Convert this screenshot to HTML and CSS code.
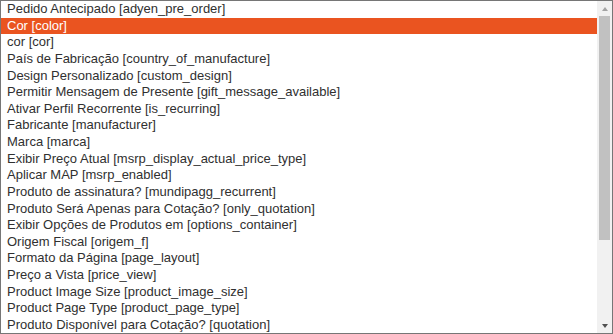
FILE: index.html
```html
<!DOCTYPE html>
<html lang="en">
<head>
    <meta charset="UTF-8">
    <meta name="viewport" content="width=device-width, initial-scale=1.0">
    <title>Atributos</title>
    <link rel="stylesheet" href="styles.css">
</head>
<body>
    <!-- Multiselect list of product attributes -->
    <div class="listbox">
        <div class="options">
            <div class="option">Pedido Antecipado [adyen_pre_order]</div>
            <div class="option selected">Cor [color]</div>
            <div class="option">cor [cor]</div>
            <div class="option">País de Fabricação [country_of_manufacture]</div>
            <div class="option">Design Personalizado [custom_design]</div>
            <div class="option">Permitir Mensagem de Presente [gift_message_available]</div>
            <div class="option">Ativar Perfil Recorrente [is_recurring]</div>
            <div class="option">Fabricante [manufacturer]</div>
            <div class="option">Marca [marca]</div>
            <div class="option">Exibir Preço Atual [msrp_display_actual_price_type]</div>
            <div class="option">Aplicar MAP [msrp_enabled]</div>
            <div class="option">Produto de assinatura? [mundipagg_recurrent]</div>
            <div class="option">Produto Será Apenas para Cotação? [only_quotation]</div>
            <div class="option">Exibir Opções de Produtos em [options_container]</div>
            <div class="option">Origem Fiscal [origem_f]</div>
            <div class="option">Formato da Página [page_layout]</div>
            <div class="option">Preço a Vista [price_view]</div>
            <div class="option">Product Image Size [product_image_size]</div>
            <div class="option">Product Page Type [product_page_type]</div>
            <div class="option">Produto Disponível para Cotação? [quotation]</div>
        </div>

        <!-- Scrollbar -->
        <div class="scrollbar">
            <div class="scroll-btn"><span class="arrow-up"></span></div>
            <div class="track"><div class="thumb"></div></div>
            <div class="scroll-btn"><span class="arrow-down"></span></div>
        </div>
    </div>
</body>
</html>
```

FILE: styles.css
```css
/* Page */
body {
    margin: 0;
    font-family: 'Liberation Sans', Arial, sans-serif;
    background-color: #fff;
}

/* The select box */
.listbox {
    display: flex;
    width: 613px;
    height: 334px;
    box-sizing: border-box;
    border: 1px solid #767676;
    background-color: #fff;
}

.options {
    flex: 1;
    overflow: hidden;
}

.option {
    height: 16.63px;
    line-height: 16.63px;
    padding-left: 6px;
    font-size: 13px;
    color: #303030;
    white-space: nowrap;
}

.option.selected {
    background-color: #ea5420;
    color: #fff;
}

/* Scrollbar */
.scrollbar {
    width: 15px;
    display: flex;
    flex-direction: column;
    background-color: #f1f1f1;
}

.scroll-btn {
    height: 15px;
    display: flex;
    align-items: center;
    justify-content: center;
}

.arrow-up {
    width: 0;
    height: 0;
    border-left: 3.5px solid transparent;
    border-right: 3.5px solid transparent;
    border-bottom: 4px solid #a3a3a3;
}

.arrow-down {
    width: 0;
    height: 0;
    border-left: 3.5px solid transparent;
    border-right: 3.5px solid transparent;
    border-top: 4px solid #505050;
}

.track {
    flex: 1;
    padding: 0 2px;
}

.thumb {
    height: 224px;
    background-color: #c1c1c1;
}
```
